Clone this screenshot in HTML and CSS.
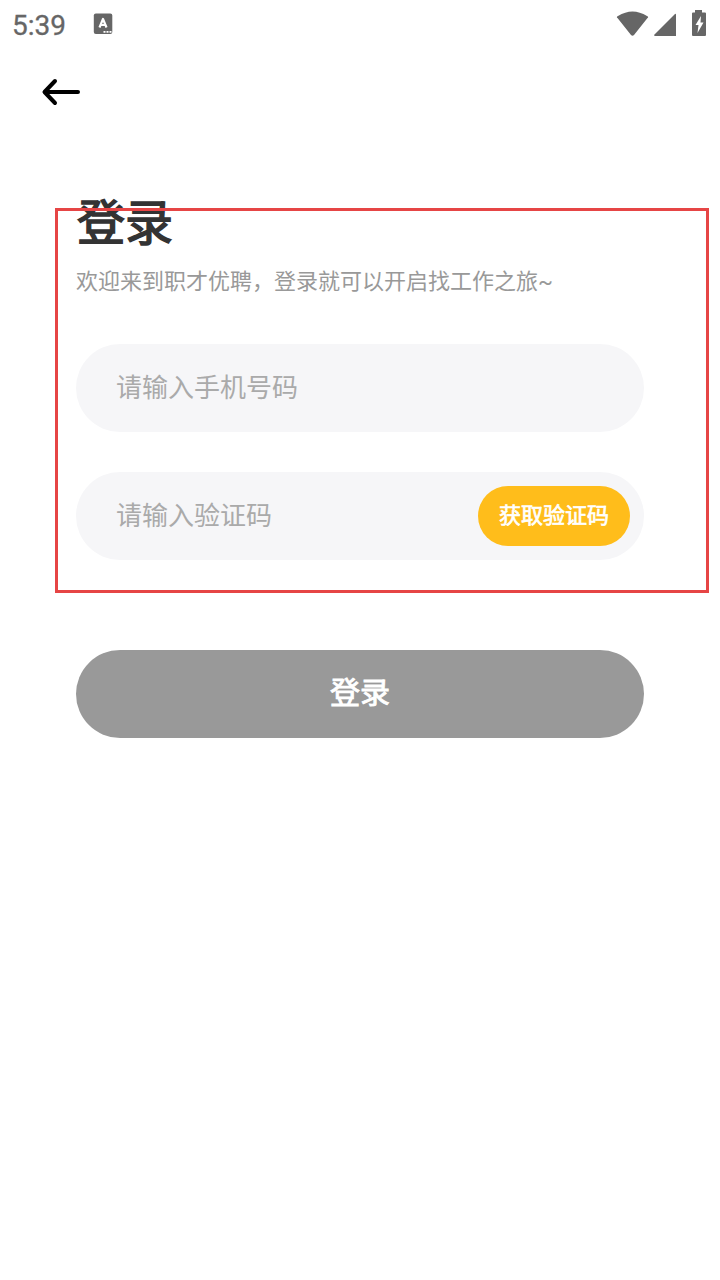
FILE: index.html
```html
<!DOCTYPE html>
<html lang="zh-CN">
<head>
<meta charset="utf-8">
<title>登录</title>
<link rel="stylesheet" href="styles.css">
</head>
<body>
<header class="status">
  <span class="time">5:39</span>
  <svg class="app-icon" width="20" height="22" viewBox="0 0 20 22"><rect x=".8" y=".5" width="18.500" height="20.500" rx="2" fill="#666"/><path d="M6.500 14.500 10 6l3.500 8.500M8 12h4" fill="none" stroke="#fff" stroke-width="2.200" stroke-linejoin="round"/><path d="M10.500 18.800h2m1 0h2m1 0h2" stroke="#fff" stroke-width="1.700"/></svg>
  <svg class="system" width="92" height="28" viewBox="0 0 92 28" fill="#666"><path d="M1.500 8Q0 7 2 6Q16.500-3 31 6Q33 7 31.500 8L18 25q-1.500 1.500-3 0z"/><path d="M60 5q0-2-1.500-.5L38.500 24.500Q37.500 26 39 26H60z"/><path d="M79 0h7v2.500h3q1 0 1 1V25q0 1-1 1H77q-1 0-1-1V3.500q0-1 1-1h2z"/><path d="m85 6-5.500 9h3l-1 8 6-10.500h-3z" fill="#fff"/></svg>
</header>
<nav class="nav"><svg width="40" height="28" viewBox="0 0 40 28"><path d="M14 3 3.500 14l10.500 11M4 14h33" fill="none" stroke="#000" stroke-width="4" stroke-linecap="round" stroke-linejoin="round"/></svg></nav>
<main class="login">
  <h1 class="title">登录</h1>
  <p class="subtitle">欢迎来到职才优聘，登录就可以开启找工作之旅<span class="tilde">~</span></p>
  <div class="field">请输入手机号码</div>
  <div class="field">请输入验证码<button class="code">获取验证码</button></div>
  <button class="submit">登录</button>
</main>
<div class="highlight"></div>
</body>
</html>
```
FILE: styles.css
```css
* { box-sizing: border-box; }
body { margin: 0; width: 720px; height: 1280px; position: relative; background: #fff; font-family: "Noto Sans CJK SC", sans-serif; overflow: hidden; }
button { border: 0; padding: 0; font-family: inherit; color: #fff; }
.status { height: 48px; display: flex; align-items: flex-start; padding: 0 12px; }
.time { width: 81px; font: 400 28px/51px Roboto, sans-serif; color: #666; -webkit-text-stroke: .3px #666; }
.app-icon { margin-top: 13px; }
.system { margin: 10px 0 0 auto; }
.nav { height: 88px; padding: 30px 0 0 41px; }
.login { padding: 46px 76px 0; }
.title { margin: 0 0 0 1px; font-size: 48px; line-height: 74px; font-weight: 400; color: #333; -webkit-text-stroke: 1.500px #333; }
.subtitle { margin: 0 0 40px; height: 48px; font-size: 22px; line-height: 47px; color: #999; white-space: nowrap; }
.tilde { font-family: Roboto, sans-serif; }
.field { height: 88px; margin-bottom: 40px; padding: 0 14px 6px 40px; border-radius: 44px; background: #f6f6f8; color: #aaa; font-size: 26px; display: flex; align-items: center; justify-content: space-between; }
.code { width: 152px; height: 60px; margin-top: 6px; padding-bottom: 6px; border-radius: 30px; background: #ffbd1b; font-size: 22px; font-weight: 400; -webkit-text-stroke: .7px #fff; }
.submit { display: block; width: 568px; height: 88px; margin-top: 90px; padding-bottom: 8px; border-radius: 44px; background: #999; font-size: 30px; font-weight: 400; -webkit-text-stroke: .9px #fff; }
.highlight { position: absolute; left: 55px; top: 207.500px; width: 654px; height: 385px; border: 3px solid #e64545; }
```
